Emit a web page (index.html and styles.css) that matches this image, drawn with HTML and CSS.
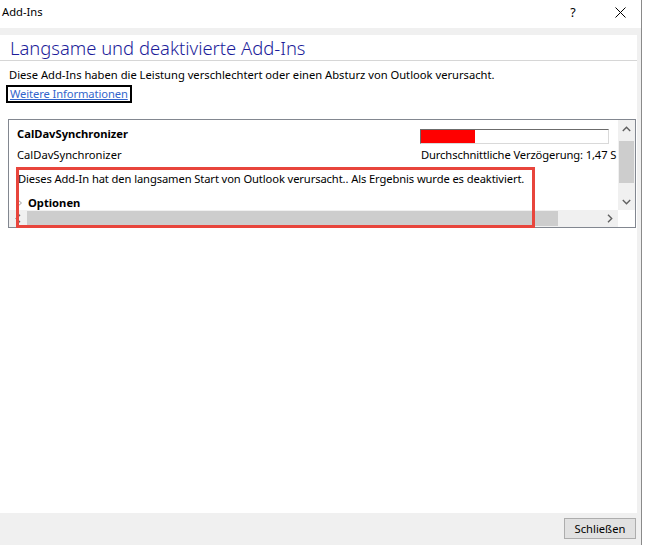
FILE: index.html
```html
<!DOCTYPE html>
<html lang="de">
<head>
<meta charset="utf-8">
<title>Add-Ins</title>
<link rel="stylesheet" href="styles.css">
</head>
<body>
<div class="window">
  <div class="titlebar">
    <span class="title">Add-Ins</span>
    <span class="tb-btn help">?</span>
    <span class="tb-btn close">
      <svg width="11" height="11" viewBox="0 0 11 11"><path d="M0.5 0.5 L10.5 10.5 M10.5 0.5 L0.5 10.5" stroke="#000" stroke-width="1" fill="none"/></svg>
    </span>
  </div>
  <div class="frame">
    <div class="panel">
      <h1 class="heading">Langsame und deaktivierte Add-Ins</h1>
      <p class="desc">Diese Add-Ins haben die Leistung verschlechtert oder einen Absturz von Outlook verursacht.</p>
      <div class="link-row"><a class="link" href="#">Weitere Informationen</a></div>
      <div class="listbox">
        <div class="list-content">
          <div class="row row-first">
            <span class="name-bold">CalDavSynchronizer</span>
            <div class="meter"><div class="meter-fill" style="width:54px"></div></div>
          </div>
          <div class="row row-second">
            <span>CalDavSynchronizer</span>
            <span class="delay">Durchschnittliche Verzögerung: 1,47 S</span>
          </div>
          <div class="row row-msg">Dieses Add-In hat den langsamen Start von Outlook verursacht.. Als Ergebnis wurde es deaktiviert.</div>
          <div class="row row-options">
            <svg class="expander" width="5" height="8" viewBox="0 0 5 8"><path d="M0.5 0.5 L4.5 4 L0.5 7.5 Z" fill="#fff" stroke="#a0a0a0" stroke-width="1"/></svg>
            <span class="options-label">Optionen</span>
          </div>
        </div>
        <div class="vscroll">
          <div class="sb-btn"><svg width="9" height="6" viewBox="0 0 9 6"><path d="M0.8 5 L4.5 1.3 L8.2 5" stroke="#606060" stroke-width="1.4" fill="none"/></svg></div>
          <div class="v-track"><div class="v-thumb"></div></div>
          <div class="sb-btn"><svg width="9" height="6" viewBox="0 0 9 6"><path d="M0.8 1 L4.5 4.7 L8.2 1" stroke="#606060" stroke-width="1.4" fill="none"/></svg></div>
        </div>
        <div class="hscroll">
          <div class="sb-btn"><svg width="6" height="9" viewBox="0 0 6 9"><path d="M5 0.8 L1.3 4.5 L5 8.2" stroke="#606060" stroke-width="1.4" fill="none"/></svg></div>
          <div class="h-track"><div class="h-thumb"></div></div>
          <div class="sb-btn"><svg width="6" height="9" viewBox="0 0 6 9"><path d="M1 0.8 L4.7 4.5 L1 8.2" stroke="#606060" stroke-width="1.4" fill="none"/></svg></div>
        </div>
        <div class="corner"></div>
        <div class="annotation"></div>
      </div>
    </div>
    <div class="footer">
      <button class="btn" type="button">Schließen</button>
    </div>
  </div>
</div>
</body>
</html>
```

FILE: styles.css
```css
* { box-sizing: border-box; }

body {
  margin: 0;
  background: #ffffff;
  font-family: "Noto Sans", "Open Sans", sans-serif;
  font-size: 11.2px;
  color: #000;
}

.window {
  width: 642px;
  height: 545px;
  border-right: 1px solid #8a8a8a;
  background: #f0f0f0;
  display: flex;
  flex-direction: column;
}

.titlebar {
  height: 28px;
  background: #ffffff;
  display: flex;
  align-items: center;
  padding: 0 0 4px 2px;
}

.title {
  flex: 1;
  line-height: 16px;
}

.tb-btn {
  width: 46px;
  height: 24px;
  display: flex;
  align-items: center;
  justify-content: center;
  font-size: 12.5px;
}

.help { padding-left: 2px; }
.close { padding-left: 4px; }

.frame {
  flex: 1;
  display: flex;
  flex-direction: column;
  padding: 7px 4px 0 0;
}

.panel {
  background: #ffffff;
  height: 478px;
}

.heading {
  margin: 0;
  padding-left: 10px;
  height: 26px;
  line-height: 25px;
  font-size: 18.4px;
  font-weight: 300;
  color: #1c1c9a;
  border-bottom: 1px solid #d6d6d6;
}

.desc {
  margin: 6px 0 0 9px;
  line-height: 16px;
}

.link-row {
  margin-top: 2px;
  padding-left: 6px;
}

.link {
  display: inline-block;
  border: 2px solid #000;
  padding: 0 2px;
  line-height: 14px;
  color: #3366cc;
  text-decoration: underline;
  letter-spacing: -0.1px;
}

.listbox {
  position: relative;
  margin: 16px 0 0 8px;
  width: 628px;
  height: 109px;
  border: 1px solid #828790;
  display: grid;
  grid-template-columns: 1fr 17px;
  grid-template-rows: 1fr 17px;
}

.list-content {
  overflow: hidden;
  padding: 6px 0 0 8px;
  min-width: 0;
}

.row {
  line-height: 16px;
  white-space: nowrap;
}

.row-first,
.row-second {
  display: grid;
  grid-template-columns: 403px auto;
}

.row-first { margin-bottom: 3px; }
.row-second { margin-bottom: 8px; }
.row-msg { margin-bottom: 8px; padding-left: 1px; letter-spacing: -0.11px; }

.name-bold { font-weight: 700; }

.meter {
  width: 189px;
  height: 15px;
  margin-top: 3px;
  background: #ffffff;
  border-top: 1px solid #6b6b6b;
  border-left: 1px solid #6b6b6b;
  border-right: 1px solid #d9d9d9;
  border-bottom: 1px solid #d9d9d9;
}

.meter-fill {
  height: 100%;
  background: #ff0000;
}

.delay { padding-left: 1px; letter-spacing: -0.12px; }

.row-options {
  display: flex;
  align-items: center;
}

.expander { margin: 0 6px 0 0; }

.options-label { font-weight: 700; }

.vscroll {
  background: #f0f0f0;
  display: flex;
  flex-direction: column;
}

.sb-btn {
  width: 17px;
  height: 17px;
  flex: none;
  display: flex;
  align-items: center;
  justify-content: center;
}

.v-track { flex: 1; }

.v-thumb {
  margin: 4px 1px 0 1px;
  height: 42px;
  background: #cdcdcd;
}

.hscroll {
  background: #f0f0f0;
  display: flex;
}

.h-track {
  flex: 1;
  padding: 1px 0 1px 1px;
}

.h-thumb {
  width: 531px;
  height: 100%;
  background: #cdcdcd;
}

.corner { background: #ffffff; }

.annotation {
  position: absolute;
  left: 7px;
  top: 47px;
  width: 519px;
  height: 61px;
  border: 3px solid #e8453c;
}

.footer {
  height: 32px;
  display: flex;
  justify-content: flex-end;
  align-items: flex-start;
  padding: 5px 1px 0 0;
}

.btn {
  width: 72px;
  height: 21px;
  background: #e1e1e1;
  border: 1px solid #adadad;
  font-family: inherit;
  font-size: 11.2px;
  color: #000;
  padding: 0;
  line-height: 17px;
}
```
